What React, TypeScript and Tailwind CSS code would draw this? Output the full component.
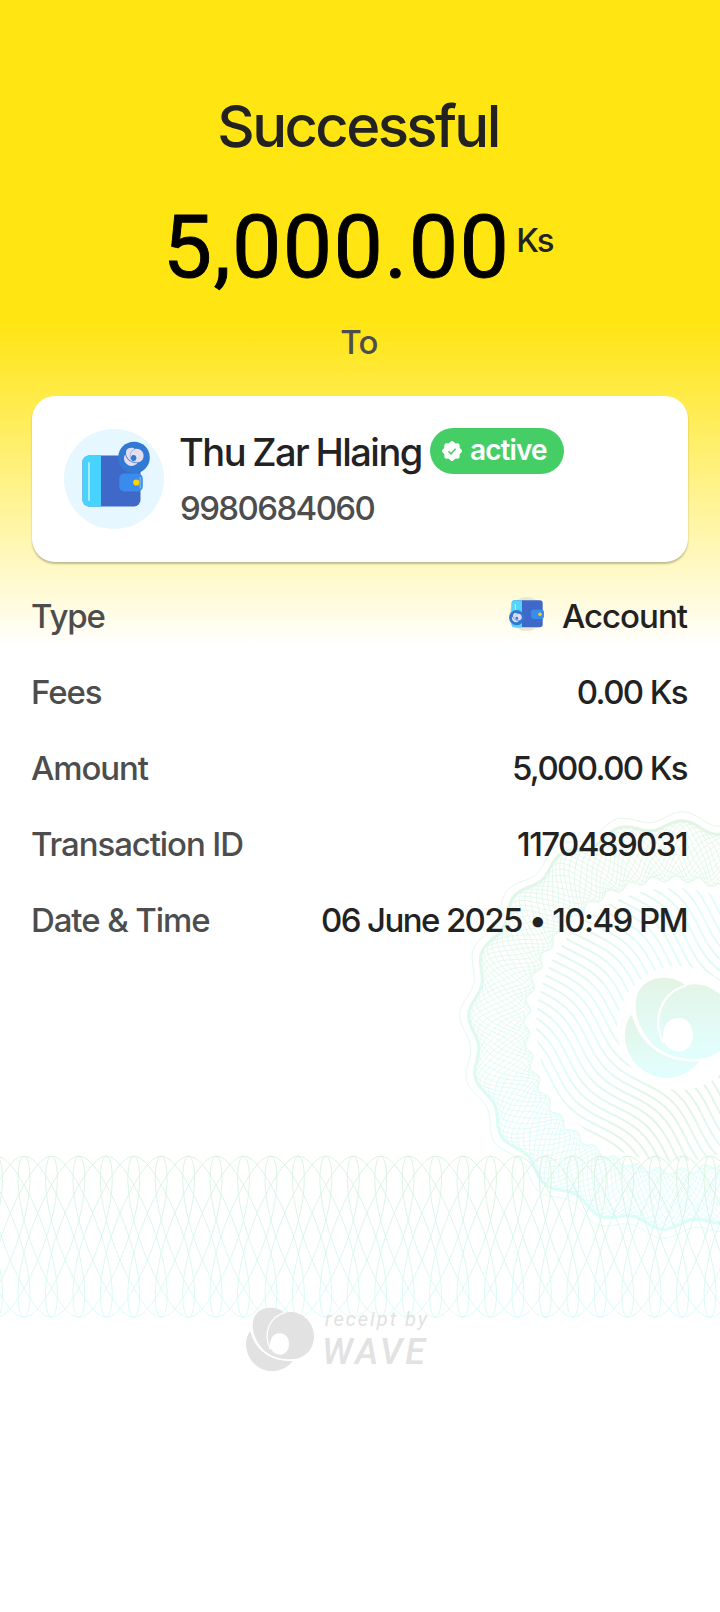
import type { ReactNode } from "react";

const BAND_PITCH = 27.44;
const BAND_MID = 1236.7;
const BAND_AMP = 80.5;

// looping curve of the banknote strip: wide arches on one side, narrow loops on the other
function bandPath(start: number, side: 1 | -1) {
  const c = (BAND_PITCH * 4) / (Math.PI * 2);
  const points: string[] = [];
  for (let t = -Math.PI * 4; t < Math.PI * 18; t += 0.08) {
    const x = start + c * t + 22 * Math.sin(t) - 0.6 * Math.sin(3 * t) - 4.5 * Math.sin(2 * t);
    const y = BAND_MID - side * BAND_AMP * Math.cos(t);
    points.push(`${x.toFixed(1)} ${y.toFixed(1)}`);
  }
  return `M${points.join("L")}`;
}

const CX = 673;
const CY = 1025;

function polarPath(radius: (a: number) => number, cx = CX, cy = CY, steps = 720) {
  const points: string[] = [];
  for (let i = 0; i < steps; i++) {
    const a = (i / steps) * Math.PI * 2;
    const r = radius(a);
    points.push(`${(cx + r * Math.sin(a)).toFixed(2)} ${(cy - r * Math.cos(a)).toFixed(2)}`);
  }
  return `M${points.join("L")}Z`;
}

const outerEdge = (a: number) => 200 + 4.5 * Math.cos(20 * (a - 0.05));
const innerEdge = (a: number) => 146 + 3 * Math.cos(40 * (a - 0.02));

const meshPaths = Array.from({ length: 18 }, (_, i) =>
  polarPath((a) => {
    const o = outerEdge(a);
    const n = innerEdge(a);
    return (o + n) / 2 + ((o - n) / 2) * Math.sin(10 * a + (i / 18) * Math.PI * 2);
  })
);

// diagonal ripples inside the rosette
function ripplePath(s0: number) {
  const points: string[] = [];
  for (let t = 1000; t < 1400; t += 4) {
    const s = s0 + 7.5 * Math.sin(((t - 1150) / 140) * Math.PI * 2);
    points.push(`${((t - s) / Math.SQRT2).toFixed(1)} ${((t + s) / Math.SQRT2).toFixed(1)}`);
  }
  return `M${points.join("L")}`;
}

function WaveMark({ fill, gap = "#fff" }: { fill: string; gap?: string }) {
  return (
    <g>
      <path d="M61 122C42 142 44 186 66 212C98 252 158 252 190 209C130 215 76 180 61 122Z" fill={fill} />
      <path
        d="M163 66C140 45 93 46 75 75C58 108 74 155 108 184C130 201 160 208 186 206C228 203 252 174 252 136C252 90 208 54 163 66Z"
        fill={fill}
      />
      <path d="M165 66C118 78 98 128 121 176" fill="none" stroke={gap} strokeWidth="4" />
      <path d="M64 120C76 180 128 214 192 208" fill="none" stroke={gap} strokeWidth="4" />
      <path d="M121 176C117 150 126 128 149 128C168 128 177 143 177 160C177 180 165 192 150 192C135 191 126 183 121 170Z" fill={gap} />
    </g>
  );
}

function SecurityPattern() {
  return (
    <svg className="pointer-events-none absolute inset-0" width="720" height="1612" viewBox="0 0 720 1612" fill="none">
      <defs>
        <linearGradient id="ring" gradientUnits="userSpaceOnUse" x1="0" y1="812" x2="0" y2="1234">
          <stop offset="0" stopColor="#e2f5e5" />
          <stop offset="1" stopColor="#dcfdfb" />
        </linearGradient>
        <linearGradient id="band" gradientUnits="userSpaceOnUse" x1="0" y1="1156" x2="0" y2="1317">
          <stop offset="0" stopColor="#d8f1dc" />
          <stop offset="1" stopColor="#d4fbf7" />
        </linearGradient>
        <linearGradient id="ripple" gradientUnits="userSpaceOnUse" x1="560" y1="900" x2="640" y2="980" spreadMethod="reflect">
          <stop offset="0" stopColor="#e2f4e6" />
          <stop offset="1" stopColor="#e2fdfb" />
        </linearGradient>
        <linearGradient id="mark" x1="0" y1="0" x2="0" y2="1">
          <stop offset="0" stopColor="#e3f4e5" />
          <stop offset="0.9" stopColor="#e2fefc" />
        </linearGradient>
        <clipPath id="disc">
          <circle cx={CX} cy={CY} r="137" />
        </clipPath>
      </defs>

      <path d={polarPath((a) => 208.5 + 5 * Math.cos(20 * (a - 0.05)))} stroke="url(#ring)" strokeWidth="1" />
      <path d={polarPath(outerEdge)} stroke="url(#ring)" strokeWidth="3" />
      {meshPaths.map((d, i) => (
        <path key={i} d={d} stroke="url(#ring)" strokeWidth="0.9" />
      ))}

      <g clipPath="url(#disc)">
        {Array.from({ length: 35 }, (_, i) => (
          <path key={i} d={ripplePath(100 + i * 8.8)} stroke="url(#ripple)" strokeWidth="2" />
        ))}
      </g>
      <circle cx="679" cy="1028" r="62" fill="#fff" />
      <g transform="translate(625 977) scale(0.526) translate(-48 -50)">
        <WaveMark fill="url(#mark)" />
      </g>

      {[0, 1, 2, 3].map((i) => (
        <g key={i} stroke="url(#band)" strokeWidth="0.9">
          <path d={bandPath(24 + i * BAND_PITCH, 1)} />
          <path d={bandPath(24 + i * BAND_PITCH, -1)} />
        </g>
      ))}
    </svg>
  );
}

function WalletAvatar() {
  return (
    <svg className="size-[100px] flex-none" viewBox="0 0 100 100">
      <circle cx="50" cy="50" r="50" fill="#e6f7ff" />
      <rect x="18.5" y="26.5" width="58" height="51" rx="6.5" fill="#3f69c9" />
      <path d="M37 26.5V77.5H25a6.5 6.5 0 0 1-6.5-6.5V33a6.5 6.5 0 0 1 6.5-6.5Z" fill="#48d3fe" />
      <path d="M25 34V71" stroke="#b5efff" strokeWidth="1.8" strokeLinecap="round" />
      <rect x="55.3" y="44.5" width="23.5" height="18" rx="5" fill="#3a8cec" />
      <path d="M76.3 48V59.5" stroke="#6fb2f5" strokeWidth="1.6" />
      <circle cx="72.3" cy="53.5" r="3.1" fill="#ffd20a" />
      <circle cx="70" cy="28.5" r="15.8" fill="#3179d3" />
      <g transform="translate(60 18.5) scale(0.096) translate(-48 -50)">
        <WaveMark fill="#e3deef" gap="#3179d3" />
      </g>
    </svg>
  );
}

function WalletIcon() {
  return (
    <svg className="relative -top-0.5 h-[34px] w-[35px]" viewBox="0 0 35 34">
      <circle cx="17.5" cy="17" r="17" fill="#ebe7d2" />
      <rect x="2.7" y="3.3" width="31" height="27" rx="3" fill="#3f69c9" />
      <path d="M13 3.3V30.3H5.7a3 3 0 0 1-3-3v-21a3 3 0 0 1 3-3Z" fill="#55d5fb" />
      <path d="M6.3 7v8" stroke="#b5efff" strokeWidth="1" />
      <rect x="22" y="12.5" width="13" height="9.5" rx="3" fill="#3a8cec" />
      <circle cx="31" cy="17.3" r="1.7" fill="#ffd20a" />
      <circle cx="7.7" cy="20.7" r="7.6" fill="#3179d3" />
      <g transform="translate(3 16) scale(0.048) translate(-48 -50)">
        <WaveMark fill="#e3deef" gap="#3179d3" />
      </g>
    </svg>
  );
}

function ActiveBadge() {
  return (
    <span className="flex h-[46px] w-[134px] items-center gap-2 rounded-full bg-[#46ce66] pl-3">
      <svg className="size-5" viewBox="0 0 20 20">
        <path d={polarPath((a) => 9.2 + 0.8 * Math.cos(8 * a), 10, 10, 120)} fill="#fff" />
        <path d="M6.5 10.3 9 12.8 13.6 7.7" fill="none" stroke="#46ce66" strokeWidth="1.5" />
      </svg>
      <span className="relative -top-px text-[28px] font-semibold leading-none tracking-[-0.9px] text-white">active</span>
    </span>
  );
}

const rows: { label: string; value: string; icon?: ReactNode }[] = [
  { label: "Type", value: "Account", icon: <WalletIcon /> },
  { label: "Fees", value: "0.00 Ks" },
  { label: "Amount", value: "5,000.00 Ks" },
  { label: "Transaction ID", value: "1170489031" },
  { label: "Date & Time", value: "06 June 2025 • 10:49 PM" },
];

export default function App() {
  return (
    <div className="relative h-[1612px] w-[720px] overflow-hidden bg-white bg-[linear-gradient(to_bottom,#ffe512_0,#ffe512_322px,#ffffff_648px)] font-['Inter',sans-serif] font-medium text-[#222]">
      <SecurityPattern />
      <main className="relative flex flex-col px-8 pt-[88px]">
        <h1 className="h-[76px] pr-1 text-center text-[58px] leading-[76px] tracking-[-2.6px]">Successful</h1>

        <div className="mt-8 flex h-[100px] justify-center pr-[5px]">
          <span className="font-['Roboto',sans-serif] text-[88px] font-normal leading-[102px] tracking-[1.3px] text-black [-webkit-text-stroke:0.9px_#000]">
            5,000.00
          </span>
          <span className="ml-1.5 mt-[24px] text-[33px] leading-[40px] tracking-[-2.2px]">Ks</span>
        </div>

        <p className="mt-[26px] h-10 pr-0.5 text-center text-[33px] leading-10 tracking-[-0.8px] text-[#4d4d4d]">To</p>

        <section className="mt-[34px] flex h-[166px] items-center rounded-[23px] bg-white px-8 shadow-[0_2px_2px_rgba(0,0,0,0.25)]">
          <WalletAvatar />
          <div className="ml-[15px] pb-[3px]">
            <div className="flex h-[46px] items-center gap-2">
              <span className="w-[243px] whitespace-nowrap pt-0.5 text-[38px] leading-[46px] tracking-[-1.5px] [word-spacing:-1.5px]">Thu Zar Hlaing</span>
              <ActiveBadge />
            </div>
            <p className="mt-[14px] pl-px text-[33px] leading-10 tracking-[-1.6px] text-[#4d4d4d]">9980684060</p>
          </div>
        </section>

        <dl className="mt-4">
          {rows.map((row) => (
            <div key={row.label} className="flex h-[76px] items-center justify-between text-[33px] leading-10">
              <dt className="-ml-px tracking-[-1.1px] text-[#4d4d4d]">{row.label}</dt>
              <dd className="flex items-center gap-[18px] pr-px">
                {row.icon}
                <span className={row.icon ? "tracking-[-1px]" : "tracking-[-1.6px]"}>{row.value}</span>
              </dd>
            </div>
          ))}
        </dl>

        <footer className="mt-[347px] flex items-center pl-[214px] text-[#e2e2e2]">
          <svg className="h-[65px] w-[68px]" viewBox="48 50 204 193">
            <WaveMark fill="#e2e2e2" />
          </svg>
          <div className="ml-2 pt-[3px] font-['Roboto',sans-serif] italic">
            <p className="ml-[3px] text-[20px] font-normal leading-[23px] tracking-[2px]">receipt by</p>
            <p className="text-[36px] leading-[42px] tracking-[3px]">WAVE</p>
          </div>
        </footer>
      </main>
    </div>
  );
}
